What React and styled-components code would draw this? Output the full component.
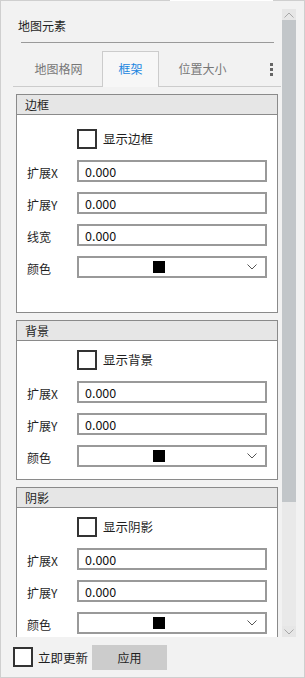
import React from "react";
import styled, { createGlobalStyle } from "styled-components";

const Global = createGlobalStyle`
  html, body { margin: 0; padding: 0; background: #f2f2f2; }
  * { box-sizing: border-box; }
  body { font-family: "Noto Sans CJK SC", "Noto Sans", sans-serif; font-size: 12px; color: #1f1f1f; }
`;

const Frame = styled.div`
  position: relative;
  width: 305px;
  height: 678px;
  border: 1px solid #cfcfcf;
  background: #f2f2f2;
  display: flex;
  flex-direction: column;
  &::before {
    content: "";
    position: absolute;
    top: -1px;
    left: 169px;
    width: 103px;
    height: 1px;
    background: #ffffff;
  }
`;

const Main = styled.div`
  display: flex;
  height: 628px;
  margin-top: 8px;
  flex-shrink: 0;
`;

const Content = styled.div`
  width: 280px;
  overflow: hidden;
  display: flex;
  flex-direction: column;
  & > * {
    flex-shrink: 0;
  }
`;

const Title = styled.div`
  height: 33px;
  padding-left: 17px;
  display: flex;
  align-items: center;
  font-size: 12px;
  padding-bottom: 1px;
`;

const Rule = styled.div`
  height: 1px;
  margin: 0 7px 0 20px;
  background: #9a9a9a;
`;

const TabBar = styled.div`
  margin: 8px 0 0 12px;
  height: 36px;
  border-bottom: 1px solid #cccccc;
  display: flex;
  align-items: flex-end;
  padding-left: 17px;
  gap: 15px;
  position: relative;
`;

const Tab = styled.div`
  width: 57px;
  height: 36px;
  margin-bottom: -1px;
  display: flex;
  align-items: center;
  justify-content: center;
  color: ${(p) => (p.$active ? "#1c86e0" : "#777777")};
  background: ${(p) => (p.$active ? "#f7f7f7" : "transparent")};
  border: 1px solid ${(p) => (p.$active ? "#cccccc" : "transparent")};
  border-bottom: none;
  padding-bottom: 2px;
`;

const Kebab = styled.div`
  position: absolute;
  right: 8px;
  top: 12px;
  display: flex;
  flex-direction: column;
  gap: 2px;
  span {
    width: 3px;
    height: 3px;
    background: #666;
  }
`;

const Sections = styled.div`
  margin: 7px 0 0 15px;
  width: 262px;
  display: flex;
  flex-direction: column;
  gap: 7px;
`;

const Section = styled.div`
  display: flex;
  flex-direction: column;
  flex-shrink: 0;
`;

const SectionHead = styled.div`
  height: 21px;
  border: 1px solid #8a8a8a;
  background: #e6e6e6;
  padding-left: 8px;
  display: flex;
  align-items: center;
  font-size: 12px;
`;

const SectionBody = styled.div`
  background: #ffffff;
  border: 1px solid #8a8a8a;
  border-top: none;
  padding: ${(p) => p.$top}px 10px ${(p) => p.$bottom}px 10px;
  display: flex;
  flex-direction: column;
  gap: 10px;
`;

const CheckRow = styled.div`
  height: 21px;
  padding-left: 50px;
  display: flex;
  align-items: flex-start;
  gap: 6px;
`;

const Box = styled.span`
  width: 20px;
  height: 20px;
  border: 2px solid #333333;
  background: #ffffff;
  flex: none;
`;

const CheckLabel = styled.span`
  line-height: 20px;
  font-size: 12.5px;
`;

const FieldRow = styled.div`
  display: flex;
  align-items: center;
  height: 22px;
`;

const FieldLabel = styled.span`
  width: 50px;
  padding-top: 3px;
`;

const Input = styled.div`
  width: 190px;
  height: 22px;
  border: 2px solid #999999;
  background: #ffffff;
  padding-left: 6px;
  display: flex;
  align-items: center;
  font-size: 12.5px;
  color: #111;
`;

const Select = styled.div`
  width: 190px;
  height: 22px;
  border: 2px solid #999999;
  background: #ffffff;
  display: flex;
  align-items: center;
`;

const Swatch = styled.div`
  flex: 1;
  display: flex;
  justify-content: center;
  span {
    width: 12px;
    height: 12px;
    background: #000;
  }
`;

const Arrow = styled.div`
  width: 26px;
  display: flex;
  justify-content: center;
  align-items: center;
`;

const ScrollBar = styled.div`
  width: 14px;
  margin-left: 1px;
  background: #e9e9e9;
  display: flex;
  flex-direction: column;
`;

const ScrollBtn = styled.div`
  height: 11px;
  background: #e6e6e6;
  display: flex;
  align-items: center;
  justify-content: center;
`;

const Thumb = styled.div`
  height: 482px;
  background: #c2c6c9;
`;

const Track = styled.div`
  flex: 1;
`;

const Footer = styled.div`
  display: flex;
  align-items: center;
  height: 40px;
  padding: 0 0 0 12px;
`;

const FooterLabel = styled.span`
  margin-left: 5px;
  width: 54px;
  font-size: 12.5px;
`;

const Button = styled.div`
  width: 75px;
  height: 25px;
  background: #cccccc;
  display: flex;
  align-items: center;
  justify-content: center;
`;

const Chevron = ({ up, color = "#555" }) => (
  <svg width="10" height="6" viewBox="0 0 10 6">
    <path
      d={up ? "M0.5 5.5 L5 1 L9.5 5.5" : "M0.5 0.5 L5 5 L9.5 0.5"}
      fill="none"
      stroke={color}
      strokeWidth="1"
    />
  </svg>
);

const Field = ({ label }) => (
  <FieldRow>
    <FieldLabel>{label}</FieldLabel>
    <Input>0.000</Input>
  </FieldRow>
);

const ColorField = () => (
  <FieldRow>
    <FieldLabel>颜色</FieldLabel>
    <Select>
      <Swatch>
        <span />
      </Swatch>
      <Arrow>
        <Chevron />
      </Arrow>
    </Select>
  </FieldRow>
);

const Group = ({ title, check, fields, top, bottom }) => (
  <Section>
    <SectionHead>{title}</SectionHead>
    <SectionBody $top={top} $bottom={bottom}>
      <CheckRow>
        <Box />
        <CheckLabel>{check}</CheckLabel>
      </CheckRow>
      {fields.map((f) => (
        <Field key={f} label={f} />
      ))}
      <ColorField />
    </SectionBody>
  </Section>
);

export default function App() {
  return (
    <>
      <Global />
      <Frame>
        <Main>
          <Content>
            <Title>地图元素</Title>
            <Rule />
            <TabBar>
              <Tab>地图格网</Tab>
              <Tab $active>框架</Tab>
              <Tab>位置大小</Tab>
              <Kebab>
                <span />
                <span />
                <span />
              </Kebab>
            </TabBar>
            <Sections>
              <Group title="边框" check="显示边框" fields={["扩展X", "扩展Y", "线宽"]} top={14} bottom={34} />
              <Group title="背景" check="显示背景" fields={["扩展X", "扩展Y"]} top={9} bottom={12} />
              <Group title="阴影" check="显示阴影" fields={["扩展X", "扩展Y"]} top={9} bottom={12} />
            </Sections>
          </Content>
          <ScrollBar>
            <ScrollBtn>
              <Chevron up color="#a8a8a8" />
            </ScrollBtn>
            <Thumb />
            <Track />
            <ScrollBtn>
              <Chevron color="#a8a8a8" />
            </ScrollBtn>
          </ScrollBar>
        </Main>
        <Footer>
          <Box />
          <FooterLabel>立即更新</FooterLabel>
          <Button>应用</Button>
        </Footer>
      </Frame>
    </>
  );
}
